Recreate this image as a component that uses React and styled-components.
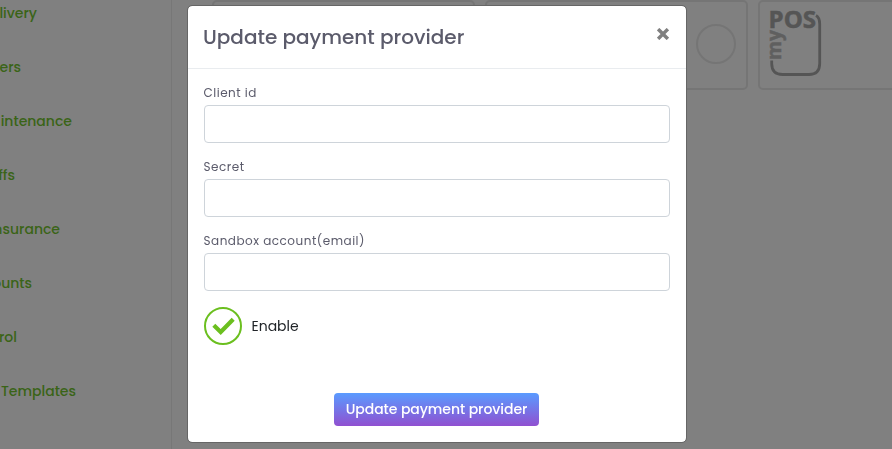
import React, { useState } from 'react';
import styled, { createGlobalStyle } from 'styled-components';

const menu = [
  { label: 'livery', end: 37 },
  { label: 'ers', end: 21 },
  { label: 'intenance', end: 72 },
  { label: 'ffs', end: 15 },
  { label: 'nsurance', end: 60 },
  { label: 'ounts', end: 32 },
  { label: 'rol', end: 17 },
  { label: 'Templates', end: 76 },
];

const fields = [
  { name: 'clientId', label: 'Client id' },
  { name: 'secret', label: 'Secret' },
  { name: 'account', label: 'Sandbox account(email)' },
];

export default function App() {
  const [enabled, setEnabled] = useState(true);

  return (
    <Page>
      <GlobalStyle />
      <Sidebar>
        {menu.map(item => (
          <MenuItem key={item.label} $end={item.end}>{item.label}</MenuItem>
        ))}
      </Sidebar>
      <Providers>
        <ProviderCard />
        <ProviderCard><Radio /></ProviderCard>
        <ProviderCard $logo><MyPosLogo /></ProviderCard>
      </Providers>
      <Backdrop>
        <Modal role="dialog">
          <ModalHeader>
            <Title>Update payment provider</Title>
            <CloseButton aria-label="Close">
              <svg width="12" height="12" viewBox="0 0 12 12">
                <path d="M2.3 2.3L9.7 9.7M9.7 2.3L2.3 9.7" stroke="#808080" strokeWidth="3.4" strokeLinecap="square" />
              </svg>
            </CloseButton>
          </ModalHeader>
          <ModalBody>
            {fields.map(field => (
              <Field key={field.name}>
                <Label htmlFor={field.name}>{field.label}</Label>
                <Input id={field.name} name={field.name} type="text" />
              </Field>
            ))}
            <EnableRow onClick={() => setEnabled(!enabled)}>
              <Circle>
                {enabled && (
                  <svg width="24" height="20" viewBox="0 0 24 20">
                    <path d="M2.8 9.3L9.7 16L22.2 3.3" fill="none" stroke="#6bbf1f" strokeWidth="4.2" />
                  </svg>
                )}
              </Circle>
              <EnableText>Enable</EnableText>
            </EnableRow>
          </ModalBody>
          <ModalFooter>
            <SubmitButton>Update payment provider</SubmitButton>
          </ModalFooter>
        </Modal>
      </Backdrop>
    </Page>
  );
}

const MyPosLogo = () => (
  <svg width="54" height="68" viewBox="0 0 54 68">
    <path d="M47 5.5Q50.7 7.5 50.7 14V53.5Q50.7 64.5 40 64.5H13.5Q2.7 64.5 2.7 53.5V50.5" fill="none" stroke="#555" strokeWidth="2.8" />
    <LogoText x="-0.4" y="18.4" fontSize="23" textLength="47.5" lengthAdjust="spacingAndGlyphs" fill="#555" stroke="#555">POS</LogoText>
    <LogoText transform="translate(12.3 50) rotate(-90)" fontSize="20" textLength="30" lengthAdjust="spacingAndGlyphs" fill="#5f5f5f" stroke="#5f5f5f">my</LogoText>
  </svg>
);

const GlobalStyle = createGlobalStyle`
  * {
    box-sizing: border-box;
  }

  body {
    margin: 0;
    overflow: hidden;
    background: #808080;
    font-family: Poppins, Inter, sans-serif;
  }

  button, input {
    font: inherit;
  }
`;

const Page = styled.div`
  display: flex;
  height: 449px;
  overflow: hidden;
`;

const Sidebar = styled.nav`
  flex: 0 0 172px;
  border-right: 1px solid #777;
  margin-top: -14px;
`;

const MenuItem = styled.div`
  display: flex;
  align-items: center;
  justify-content: flex-end;
  width: ${props => props.$end}px;
  height: 54px;
  color: #3a6417;
  font-size: 14px;
  font-weight: 500;
  white-space: nowrap;
`;

const Providers = styled.main`
  display: flex;
  align-items: flex-start;
  gap: 10px;
  padding-left: 40px;
`;

const ProviderCard = styled.div`
  display: flex;
  flex: 0 0 263px;
  align-items: ${props => props.$logo ? 'flex-start' : 'center'};
  justify-content: ${props => props.$logo ? 'flex-start' : 'flex-end'};
  height: 90px;
  padding: ${props => props.$logo ? '8px 9px' : '0 10px 2px'};
  border: 2px solid #757575;
  border-radius: 5px;
`;

const Radio = styled.div`
  width: 40px;
  height: 40px;
  border: 2px solid #757575;
  border-radius: 50%;
`;

const LogoText = styled.text`
  font-family: "Open Sans", sans-serif;
  font-weight: 700;
  stroke-width: 0.5px;
`;

const Backdrop = styled.div`
  position: fixed;
  inset: 0;
  padding: 5px 0 0 187px;
`;

const Modal = styled.section`
  display: flex;
  flex-direction: column;
  width: 500px;
  height: 438px;
  background: #fff;
  background-clip: padding-box;
  border: 1px solid #666;
  border-radius: 5px;
`;

const ModalHeader = styled.header`
  display: flex;
  justify-content: space-between;
  height: 63px;
  padding: 15px 17px 0 15px;
  border-bottom: 1px solid #e9ecef;
`;

const Title = styled.h5`
  margin: 0;
  color: #5b5b6b;
  font-size: 20px;
  font-weight: 500;
  line-height: 32px;
`;

const CloseButton = styled.button`
  display: flex;
  width: 12px;
  height: 12px;
  margin-top: 6.5px;
  padding: 0;
  border: 0;
  background: none;
`;

const ModalBody = styled.div`
  flex: 1;
  padding: 14px 16px 0;
`;

const Field = styled.div`
  height: 74px;
`;

const Label = styled.label`
  display: block;
  height: 22px;
  margin-left: -0.5px;
  color: #5b5b6b;
  font-size: 12px;
  line-height: 20px;
  letter-spacing: 0.5px;
`;

const Input = styled.input`
  display: block;
  width: 466px;
  height: 38px;
  padding: 6px 12px;
  border: 1px solid #ced4da;
  border-radius: 4px;
`;

const EnableRow = styled.div`
  display: flex;
  align-items: center;
  gap: 9.5px;
  width: 120px;
  margin-top: 2px;
`;

const Circle = styled.span`
  display: flex;
  align-items: center;
  justify-content: center;
  width: 38px;
  height: 38px;
  border: 2px solid #6bbf1f;
  border-radius: 50%;
`;

const EnableText = styled.span`
  color: #212529;
  font-size: 14px;
`;

const ModalFooter = styled.footer`
  display: flex;
  justify-content: center;
  padding: 0 1px 16px 0;
`;

const SubmitButton = styled.button`
  width: 205px;
  height: 33px;
  padding: 0;
  border: 0;
  border-radius: 4px;
  background: linear-gradient(#5a9bff, #9050d0);
  color: #fff;
  font-size: 14px;
  font-weight: 500;
  letter-spacing: -0.06px;
  white-space: nowrap;
`;
